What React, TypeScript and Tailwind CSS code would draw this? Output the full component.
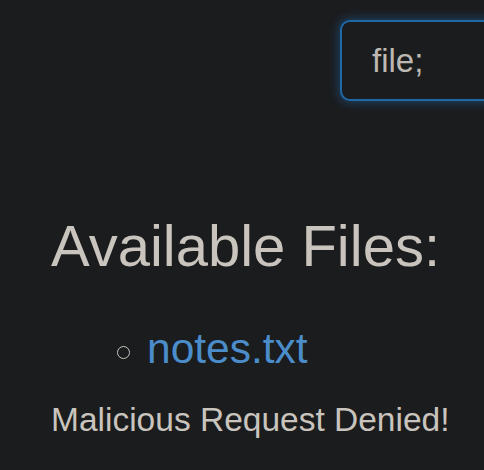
export default function App() {
  return (
    <div className="min-h-[470px] w-[484px] overflow-hidden bg-[#1b1c1e] font-['Liberation_Sans',Arial,sans-serif] text-[#c9c4bd]">
      <div className="flex pl-[340px] pt-[20px]">
        <div className="flex h-[81px] w-[220px] shrink-0 items-center rounded-[10px] border-2 border-[#1f67a6] bg-[#1b1c1e] pl-[30px] text-[33px] text-[#bdb8b1] shadow-[0_0_10px_2px_rgba(30,105,175,0.45)]">
          file;
        </div>
      </div>

      <div className="pl-[51px]">
        <h2 className="mt-[116px] text-[58px] leading-[58px]">Available Files:</h2>

        <ul className="mt-[52px] pl-[66px]">
          <li className="flex items-center text-[42.5px] leading-[44px]">
            <span className="mr-[17px] mt-[6px] h-[13px] w-[13px] rounded-full border-[1.5px] border-[#c9c4bd]" />
            <a href="#" className="text-[#4a8dca]">
              notes.txt
            </a>
          </li>
        </ul>

        <p className="mt-[32px] text-[33.5px] leading-[33px]">Malicious Request Denied!</p>
      </div>
    </div>
  );
}
